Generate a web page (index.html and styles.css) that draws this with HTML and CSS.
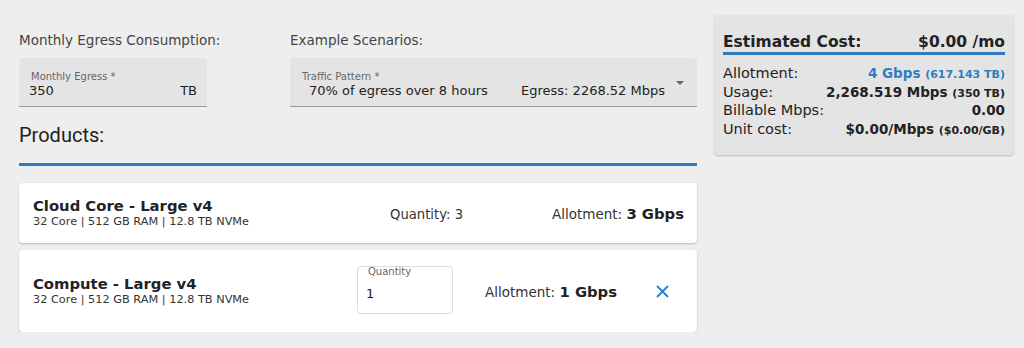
FILE: index.html
```html
<!DOCTYPE html>
<html>
<head>
<meta charset="utf-8">
<link rel="stylesheet" href="styles.css">
</head>
<body>
<div class="page">
  <main class="main">
    <div class="top-row">
      <section class="group group-egress">
        <div class="group-label">Monthly Egress Consumption:</div>
        <div class="field">
          <div class="field-label">Monthly Egress *</div>
          <div class="field-value"><span>350</span><span>TB</span></div>
        </div>
      </section>
      <section class="group group-scenario">
        <div class="group-label">Example Scenarios:</div>
        <div class="field field-select">
          <div class="field-label">Traffic Pattern *</div>
          <div class="field-value select-value"><span>70% of egress over 8 hours</span><span>Egress: 2268.52 Mbps</span></div>
          <span class="arrow"></span>
        </div>
      </section>
    </div>
    <h2 class="products-title">Products:</h2>
    <div class="rule"></div>
    <div class="card card-fixed">
      <div class="info">
        <div class="name">Cloud Core - Large v4</div>
        <div class="spec">32 Core | 512 GB RAM | 12.8 TB NVMe</div>
      </div>
      <div class="qty-text">Quantity: 3</div>
      <div class="allot">Allotment: <b>3 Gbps</b></div>
    </div>
    <div class="card card-edit">
      <div class="info">
        <div class="name">Compute - Large v4</div>
        <div class="spec">32 Core | 512 GB RAM | 12.8 TB NVMe</div>
      </div>
      <div class="qty-input">
        <div class="qty-label">Quantity</div>
        <div class="qty-value">1</div>
      </div>
      <div class="allot">Allotment: <b>1 Gbps</b></div>
      <svg class="close" width="13" height="13" viewBox="0 0 13 13"><path d="M1 1 L12 12 M12 1 L1 12" stroke="#2e7dbf" stroke-width="1.8" fill="none"/></svg>
    </div>
  </main>
  <aside class="summary">
    <div class="sum-head"><span>Estimated Cost:</span><span>$0.00 /mo</span></div>
    <div class="sum-row"><span>Allotment:</span><b class="blue">4 Gbps <small>(617.143 TB)</small></b></div>
    <div class="sum-row"><span>Usage:</span><b>2,268.519 Mbps <small>(350 TB)</small></b></div>
    <div class="sum-row"><span>Billable Mbps:</span><b>0.00</b></div>
    <div class="sum-row"><span>Unit cost:</span><b>$0.00/Mbps <small>($0.00/GB)</small></b></div>
  </aside>
</div>
</body>
</html>
```
FILE: styles.css
```css
* { box-sizing: border-box; }
html, body { margin: 0; padding: 0; background: #eeeeee; }
body { font-family: "DejaVu Sans", "Open Sans", sans-serif; color: #222; }
.page { display: flex; gap: 17px; padding: 15px 0 0 19px; }
.main { width: 678px; display: flex; flex-direction: column; }
.top-row { display: flex; gap: 83px; padding-top: 17px; }
.group-egress { width: 188px; }
.group-scenario { width: 407px; }
.group-label { font-size: 13.5px; color: #444; line-height: 16px; height: 26px; white-space: nowrap; }
.field { position: relative; background: #e4e4e4; border-bottom: 1px solid #9a9a9a; border-radius: 4px 4px 0 0; height: 49px; padding: 13px 10px 0 12px; }
.field-label { font-size: 10px; color: #666; line-height: 11px; }
.field-value { display: flex; justify-content: space-between; font-size: 13px; line-height: 18px; color: #222; padding-left: 0; }
.group-egress .field-value { margin-left: -2px; }
.select-value { padding-left: 7px; padding-right: 22px; }
.arrow { position: absolute; right: 13px; top: 23px; width: 0; height: 0; border-left: 4px solid transparent; border-right: 4px solid transparent; border-top: 4px solid #666; }
.products-title { margin: 16px 0 0; font-family: Roboto, "Liberation Sans", sans-serif; font-weight: 400; font-size: 20px; line-height: 24px; color: #222; }
.rule { height: 3px; background: #2e7bbf; margin-top: 16px; margin-bottom: 17px; }
.card { background: #fff; border-radius: 4px; box-shadow: 0 1px 2px rgba(0,0,0,0.22); display: flex; align-items: center; padding: 0 13px 0 14px; }
.card-fixed { height: 60px; }
.card-edit { height: 82px; margin-top: 7px; }
.info { display: flex; flex-direction: column; white-space: nowrap; }
.card-fixed .info { width: 357px; }
.card-edit .info { width: 324px; }
.name { font-weight: 700; font-size: 14.8px; line-height: 18px; color: #222; }
.spec { font-size: 11.3px; line-height: 14px; color: #333; }
.qty-text { font-size: 13.2px; color: #333; padding-top: 2px; }
.card-fixed .allot { margin-left: auto; }
.allot { font-size: 13.5px; color: #333; white-space: nowrap; }
.allot b { font-size: 14.8px; color: #222; }
.qty-input { width: 96px; height: 48px; border: 1px solid #dcdcdc; border-radius: 4px; padding: 0 0 0 8px; margin-top: -3px; }
.qty-label { font-size: 10px; color: #666; line-height: 11px; margin-top: -1px; padding-left: 2px; }
.qty-value { font-size: 13px; line-height: 18px; margin-top: 8px; }
.card-edit .allot { margin-left: 32px; }
.close { margin-left: auto; margin-right: 15px; }
.summary { width: 300px; height: 140px; background: #e4e4e4; border-radius: 4px; box-shadow: 0 1px 2px rgba(0,0,0,0.2); padding: 17px 9px 0 9px; }
.sum-head { display: flex; justify-content: space-between; font-weight: 700; font-size: 15.5px; line-height: 20px; border-bottom: 3px solid #2e7bbf; color: #222; }
.sum-row { display: flex; justify-content: space-between; align-items: baseline; font-size: 14.5px; line-height: 18px; height: 18.6px; color: #222; }
.sum-row > * { line-height: 18px; }
.sum-head + .sum-row { margin-top: 9px; }
.sum-row b { font-weight: 700; font-size: 13.5px; }
.sum-row small { font-size: 11px; line-height: 1; }
.blue { color: #2f7fc0; }
```
